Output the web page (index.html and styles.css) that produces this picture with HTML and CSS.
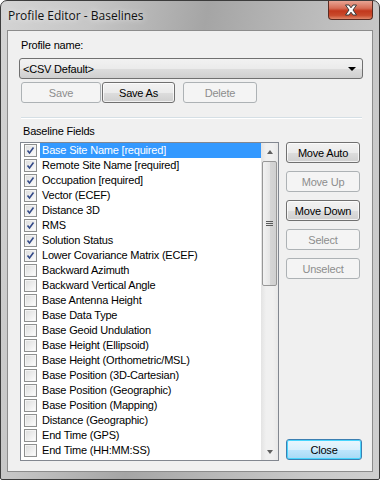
FILE: index.html
```html
<!DOCTYPE html>
<html lang="en">
<head>
    <meta charset="UTF-8">
    <title>Profile Editor - Baselines</title>
    <link rel="stylesheet" href="styles.css">
</head>
<body>
    <div class="window">
        <!-- Title bar -->
        <div class="titlebar">
            <div class="title">Profile Editor - Baselines</div>
            <div class="close-btn">
                <svg width="14" height="12" viewBox="0 0 14 12">
                    <path d="M1.5 1 L5 1 L7 3.8 L9 1 L12.5 1 L9 6 L12.5 11 L9 11 L7 8.2 L5 11 L1.5 11 L5 6 Z" fill="#fff" stroke="#3a3a3a" stroke-width="1"/>
                </svg>
            </div>
        </div>

        <!-- Client area -->
        <div class="client">
            <div class="label">Profile name:</div>
            <div class="combo">
                <span>&lt;CSV Default&gt;</span>
                <span class="combo-arrow"></span>
            </div>
            <div class="profile-buttons">
                <button class="btn btn-save" disabled>Save</button>
                <button class="btn btn-saveas">Save As</button>
                <button class="btn btn-delete" disabled>Delete</button>
            </div>

            <div class="separator"></div>

            <div class="label fields-label">Baseline Fields</div>

            <div class="fields">
                <div class="listbox">
                    <div class="rows">
                        <div class="row selected"><span class="check on"></span><span class="row-text">Base Site Name [required]</span></div>
                        <div class="row"><span class="check on"></span><span class="row-text">Remote Site Name [required]</span></div>
                        <div class="row"><span class="check on"></span><span class="row-text">Occupation [required]</span></div>
                        <div class="row"><span class="check on"></span><span class="row-text">Vector (ECEF)</span></div>
                        <div class="row"><span class="check on"></span><span class="row-text">Distance 3D</span></div>
                        <div class="row"><span class="check on"></span><span class="row-text">RMS</span></div>
                        <div class="row"><span class="check on"></span><span class="row-text">Solution Status</span></div>
                        <div class="row"><span class="check on"></span><span class="row-text">Lower Covariance Matrix (ECEF)</span></div>
                        <div class="row"><span class="check"></span><span class="row-text">Backward Azimuth</span></div>
                        <div class="row"><span class="check"></span><span class="row-text">Backward Vertical Angle</span></div>
                        <div class="row"><span class="check"></span><span class="row-text">Base Antenna Height</span></div>
                        <div class="row"><span class="check"></span><span class="row-text">Base Data Type</span></div>
                        <div class="row"><span class="check"></span><span class="row-text">Base Geoid Undulation</span></div>
                        <div class="row"><span class="check"></span><span class="row-text">Base Height (Ellipsoid)</span></div>
                        <div class="row"><span class="check"></span><span class="row-text">Base Height (Orthometric/MSL)</span></div>
                        <div class="row"><span class="check"></span><span class="row-text">Base Position (3D-Cartesian)</span></div>
                        <div class="row"><span class="check"></span><span class="row-text">Base Position (Geographic)</span></div>
                        <div class="row"><span class="check"></span><span class="row-text">Base Position (Mapping)</span></div>
                        <div class="row"><span class="check"></span><span class="row-text">Distance (Geographic)</span></div>
                        <div class="row"><span class="check"></span><span class="row-text">End Time (GPS)</span></div>
                        <div class="row"><span class="check"></span><span class="row-text">End Time (HH:MM:SS)</span></div>
                    </div>
                    <div class="scrollbar">
                        <div class="arrow arrow-up"></div>
                        <div class="track">
                            <div class="thumb"><span class="grip"></span></div>
                        </div>
                        <div class="arrow arrow-down"></div>
                    </div>
                </div>

                <div class="side">
                    <div class="side-buttons">
                        <button class="btn">Move Auto</button>
                        <button class="btn" disabled>Move Up</button>
                        <button class="btn">Move Down</button>
                        <button class="btn" disabled>Select</button>
                        <button class="btn" disabled>Unselect</button>
                    </div>
                    <button class="btn btn-close">Close</button>
                </div>
            </div>
        </div>
    </div>
</body>
</html>
```

FILE: styles.css
```css
/* Page */
body {
    margin: 0;
    padding: 0;
    background: #ffffff;
}

/* Window frame */
.window {
    width: 380px;
    height: 480px;
    box-sizing: border-box;
    border: 1px solid #3c3c3c;
    border-radius: 7px 7px 2px 2px;
    background: linear-gradient(100deg, #d4d4d4 0%, #c6c6c6 20%, #a5a5a5 45%, #b8b8b8 65%, #c9c9c9 85%, #cfcfcf 100%);
    display: flex;
    flex-direction: column;
    font-family: "Liberation Sans", Arial, sans-serif;
    font-size: 11px;
    letter-spacing: -0.2px;
    color: #000;
}

/* Title bar */
.titlebar {
    height: 29px;
    display: flex;
    align-items: flex-start;
}

.title {
    padding: 6px 0 0 7px;
    font-family: "Open Sans", "Liberation Sans", sans-serif;
    font-size: 12px;
    letter-spacing: 0;
    color: #111;
    text-shadow: 0 0 6px rgba(255, 255, 255, 0.9);
}

.close-btn {
    margin-left: auto;
    margin-right: 6px;
    width: 45px;
    height: 19px;
    box-sizing: border-box;
    border: 1px solid #5a2b22;
    border-top: none;
    border-radius: 0 0 4px 4px;
    background: linear-gradient(#e8a493 0%, #d66d56 40%, #c2381d 55%, #c94a2c 80%, #e0876a 100%);
    display: flex;
    align-items: center;
    justify-content: center;
}

/* Client area */
.client {
    flex: 1;
    margin: 0 6px 7px 6px;
    padding: 8px 10px 0 13px;
    background: #f0f0f0;
    border: 1px solid #8c8c8c;
}

.label {
    height: 13px;
    line-height: 13px;
}

/* Combo box */
.combo {
    margin: 6px 0 0 -2px;
    width: 344px;
    height: 21px;
    box-sizing: border-box;
    border: 1px solid #707070;
    border-radius: 3px;
    background: linear-gradient(#f2f2f2 0%, #ebebeb 50%, #dddddd 51%, #cfcfcf 100%);
    display: flex;
    align-items: center;
    padding: 0 6px 0 3px;
}

.combo-arrow {
    margin-left: auto;
    width: 0;
    height: 0;
    border-left: 4px solid transparent;
    border-right: 4px solid transparent;
    border-top: 4px solid #000;
}

/* Buttons */
.btn {
    font-family: "Liberation Sans", Arial, sans-serif;
    font-size: 11px;
    letter-spacing: -0.2px;
    color: #000;
    height: 21px;
    padding: 0;
    box-sizing: border-box;
    border: 1px solid #707070;
    border-radius: 3px;
    background: linear-gradient(#f2f2f2 0%, #ebebeb 50%, #dddddd 51%, #cfcfcf 100%);
    box-shadow: inset 0 0 0 1px rgba(255, 255, 255, 0.7);
}

.btn:disabled {
    color: #8d8d8d;
    border-color: #adb2b5;
    background: #f4f4f4;
    box-shadow: none;
}

.profile-buttons {
    display: flex;
    margin-top: 3px;
}

.btn-save {
    width: 80px;
}

.btn-saveas {
    width: 73px;
    margin-left: 1px;
}

.btn-delete {
    width: 74px;
    margin-left: 8px;
}

/* Separator line */
.separator {
    margin: 14px 0 0 0;
    height: 0;
    border-top: 1px solid #d5dfe5;
    border-bottom: 1px solid #ffffff;
}

.fields-label {
    margin-top: 6px;
    margin-left: 2px;
}

/* List + side buttons */
.fields {
    display: flex;
    margin-top: 4px;
    margin-left: -1px;
}

.listbox {
    width: 260px;
    height: 319px;
    box-sizing: border-box;
    border: 1px solid #828790;
    background: #ffffff;
    display: flex;
}

.rows {
    flex: 1;
}

.row {
    height: 15px;
    display: flex;
    align-items: center;
}

.check {
    width: 13px;
    height: 13px;
    box-sizing: border-box;
    margin-left: 3px;
    border: 1px solid #8e8f8f;
    background: linear-gradient(135deg, #dcdcdc 0%, #f0f0f0 60%, #ffffff 100%);
    box-shadow: inset 0 0 0 1px #f4f4f4;
}

.check.on {
    background:
        url("data:image/svg+xml,%3Csvg xmlns='http://www.w3.org/2000/svg' width='11' height='11'%3E%3Cpath d='M2.5 5.5 L4.5 8 L8.5 2.5' fill='none' stroke='%23344a88' stroke-width='1.6'/%3E%3C/svg%3E") center/11px 11px no-repeat,
        linear-gradient(135deg, #dcdcdc 0%, #f0f0f0 60%, #ffffff 100%);
}

.row-text {
    margin-left: 3px;
    height: 15px;
    line-height: 15px;
    padding: 0 2px;
    white-space: nowrap;
}

.row.selected .row-text {
    flex: 1;
    background: #3399ff;
    color: #ffffff;
}

/* Vertical scrollbar */
.scrollbar {
    width: 17px;
    display: flex;
    flex-direction: column;
    background: linear-gradient(90deg, #e3e3e3, #f0f0f0 30%, #f0f0f0 70%, #e8e8e8);
}

.arrow {
    height: 17px;
    display: flex;
    align-items: center;
    justify-content: center;
}

.arrow::after {
    content: '';
    width: 0;
    height: 0;
    border-left: 3.5px solid transparent;
    border-right: 3.5px solid transparent;
}

.arrow-up::after {
    border-bottom: 4px solid #606060;
}

.arrow-down::after {
    border-top: 4px solid #606060;
}

.track {
    flex: 1;
    padding-top: 1px;
}

.thumb {
    margin: 0 1px;
    height: 125px;
    box-sizing: border-box;
    border: 1px solid #979797;
    border-radius: 2px;
    background: linear-gradient(90deg, #f2f2f2, #e6e6e6 50%, #d6d6d6 51%, #d0d0d0);
    display: flex;
    align-items: center;
    justify-content: center;
}

.grip {
    width: 7px;
    height: 5px;
    background: repeating-linear-gradient(#5a5a5a 0, #5a5a5a 1px, transparent 1px, transparent 2px);
}

/* Right column */
.side {
    margin-left: 7px;
    display: flex;
    flex-direction: column;
    justify-content: space-between;
    width: 76px;
}

.side-buttons {
    display: flex;
    flex-direction: column;
    gap: 8px;
}

.side-buttons .btn {
    width: 74px;
}

.btn-close {
    width: 76px;
    margin-bottom: 1px;
    border-color: #3c7fb1;
    box-shadow: inset 0 0 0 1px #48d5fd;
    background: linear-gradient(#eaf6fd 0%, #d9f0fc 50%, #bee6fd 51%, #a7d9f5 100%);
}
```
